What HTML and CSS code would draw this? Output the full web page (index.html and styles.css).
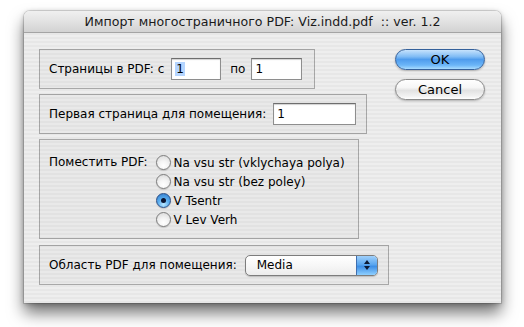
FILE: index.html
```html
<!DOCTYPE html>
<html lang="ru">
<head>
<meta charset="utf-8">
<title>Импорт многостраничного PDF</title>
<link rel="stylesheet" href="styles.css">
</head>
<body>
<div class="window">
  <div class="titlebar">Импорт многостраничного PDF: Viz.indd.pdf&nbsp; :: ver. 1.2</div>
  <div class="content">
    <div class="groups">
      <div class="group g1">
        <span class="label">Страницы в PDF: с</span>
        <span class="field f1"><span class="sel">1</span></span>
        <span class="label po">по</span>
        <span class="field f2">1</span>
      </div>
      <div class="group g2">
        <span class="label">Первая страница для помещения:</span>
        <span class="field f3">1</span>
      </div>
      <div class="group g3">
        <span class="label place">Поместить PDF:</span>
        <div class="radios">
          <div class="radio-row"><span class="radio"></span>Na vsu str (vklychaya polya)</div>
          <div class="radio-row"><span class="radio"></span>Na vsu str (bez poley)</div>
          <div class="radio-row"><span class="radio on"></span>V Tsentr</div>
          <div class="radio-row"><span class="radio"></span>V Lev Verh</div>
        </div>
      </div>
      <div class="group g4">
        <span class="label">Область PDF для помещения:</span>
        <span class="popup">
          <span class="popup-text">Media</span>
          <span class="popup-arrows">
            <svg width="8" height="12" viewBox="0 0 8 12"><path d="M4 1 L7 5 L1 5 Z" fill="#0d1a33"/><path d="M4 11 L7 7 L1 7 Z" fill="#0d1a33"/></svg>
          </span>
        </span>
      </div>
    </div>
    <div class="buttons">
      <span class="btn ok">OK</span>
      <span class="btn cancel">Cancel</span>
    </div>
  </div>
</div>
</body>
</html>
```
FILE: styles.css
```css
html, body {
  margin: 0;
  padding: 0;
  background: #ffffff;
}
body {
  width: 524px;
  height: 327px;
  overflow: hidden;
  font-family: "DejaVu Sans", "Noto Sans", sans-serif;
  font-size: 12px;
  color: #000;
}
.window {
  margin: 11px 0 0 24px;
  width: 477px;
  height: 292px;
  border-radius: 6px 6px 0 0;
  background: repeating-linear-gradient(to bottom, #eeeeee 0px, #eeeeee 2px, #e7e7e7 2px, #e7e7e7 4px);
  box-shadow: 0 10px 16px rgba(0,0,0,0.55), 0 1px 5px rgba(0,0,0,0.25), 0 0 0 1px rgba(0,0,0,0.12);
  display: flex;
  flex-direction: column;
}
.titlebar {
  height: 21px;
  border-bottom: 1px solid #a4a4a4;
  border-radius: 6px 6px 0 0;
  background: linear-gradient(to bottom, #f0f0f0 0%, #e2e2e2 50%, #d2d2d2 100%);
  text-align: center;
  line-height: 22px;
  font-size: 12.6px;
  color: #1a1a1a;
}
.content {
  display: flex;
  padding: 16px 0 0 15px;
}
.groups {
  display: flex;
  flex-direction: column;
  gap: 5px;
  width: 356px;
}
.group {
  box-sizing: border-box;
  border: 1px solid rgba(0,0,0,0.28);
  background: rgba(0,0,0,0.02);
  display: flex;
  align-items: center;
  padding-left: 9px;
}
.g1 { width: 276px; height: 40px; }
.g2 { width: 328px; height: 40px; }
.g3 { width: 320px; height: 100px; align-items: flex-start; padding-top: 13px; }
.g4 { width: 350px; height: 40px; margin-top: 1px; }
.label { white-space: nowrap; }
.field {
  box-sizing: border-box;
  height: 22px;
  border: 1px solid #8e8e8e;
  border-top-color: #6e6e6e;
  background: #fff;
  box-shadow: inset 0 1px 1px rgba(0,0,0,0.18);
  padding: 1px 0 0 3px;
  line-height: 18px;
  margin-left: 7px;
}
.f1 { width: 50px; }
.f2 { width: 51px; margin-left: 6px; }
.f3 { width: 83px; }
.po { margin-left: 9px; }
.sel { background: #b5d5ff; padding: 0 1px; }
.place { line-height: 19px; }
.radios {
  display: flex;
  flex-direction: column;
  margin-left: 8px;
}
.radio-row {
  display: flex;
  align-items: center;
  height: 19px;
  white-space: nowrap;
}
.radio {
  box-sizing: border-box;
  width: 15px;
  height: 15px;
  border-radius: 50%;
  border: 1px solid #7c7c7c;
  background: radial-gradient(circle at 50% 75%, #ffffff 0%, #f4f4f4 40%, #d6d6d6 100%);
  box-shadow: 0 1px 1px rgba(0,0,0,0.15);
  margin-right: 3px;
  flex: none;
  position: relative;
}
.radio.on {
  border-color: #2a4e86;
  background: radial-gradient(circle at 50% 80%, #b9e6ff 0%, #5aaeef 45%, #2f77c9 100%);
}
.radio.on::after {
  content: "";
  position: absolute;
  left: 4px;
  top: 4px;
  width: 5px;
  height: 5px;
  border-radius: 50%;
  background: #0b1430;
}
.popup {
  box-sizing: border-box;
  margin-left: 8px;
  width: 133px;
  height: 21px;
  border: 1px solid #7d7d7d;
  border-radius: 5px;
  background: linear-gradient(to bottom, #ffffff 0%, #f7f7f7 50%, #ececec 100%);
  box-shadow: 0 1px 1px rgba(0,0,0,0.18);
  display: flex;
  overflow: hidden;
}
.popup-text {
  flex: 1;
  padding-left: 11px;
  line-height: 19px;
}
.popup-arrows {
  width: 20px;
  display: flex;
  align-items: center;
  justify-content: center;
  border-left: 1px solid #3f6fb0;
  background: linear-gradient(to bottom, #9fd0fb 0%, #5aa6ef 45%, #3e8fe6 55%, #8fd0ff 100%);
}
.buttons {
  display: flex;
  flex-direction: column;
  gap: 9px;
  margin-left: 0;
}
.btn {
  box-sizing: border-box;
  width: 90px;
  height: 21px;
  border-radius: 11px;
  text-align: center;
  line-height: 19px;
  font-size: 13px;
  box-shadow: 0 1px 2px rgba(0,0,0,0.25);
}
.ok {
  border: 1px solid #35619b;
  background: linear-gradient(to bottom, #c6e2fc 0%, #80bcf5 35%, #4f9ced 50%, #6cb6f8 80%, #a9dcff 100%);
}
.cancel {
  border: 1px solid #8a8a8a;
  background: linear-gradient(to bottom, #ffffff 0%, #f6f6f6 40%, #e2e2e2 55%, #f2f2f2 85%, #ffffff 100%);
}
```
